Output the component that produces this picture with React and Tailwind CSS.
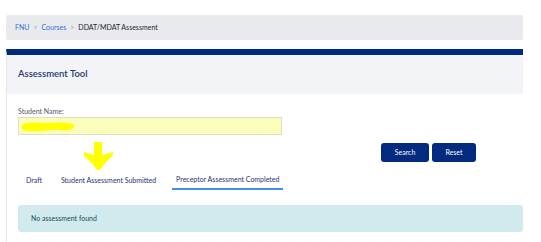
export default function App() {
  return (
    <div className="w-[541px] h-[242px] overflow-hidden bg-white pl-[6px] pr-[18px] pt-[15px] font-['Lato','Open_Sans',sans-serif]">
      {/* Breadcrumb */}
      <div className="h-[25px] rounded-[2px] bg-[#e9eaee] flex items-center gap-[4px] pl-[9px] text-[7px]">
        <span className="text-[#2f6fd8]">FNU</span>
        <span className="text-[#9aa0aa]">&gt;</span>
        <span className="text-[#2f6fd8]">Courses</span>
        <span className="text-[#9aa0aa]">&gt;</span>
        <span className="text-[#1f2330]">DDAT/MDAT Assessment</span>
      </div>

      {/* Card */}
      <div className="mt-[9px] border-t-[6px] border-[#022a7e] border-l border-l-[#e4e6ea] h-[200px]">
        <div className="h-[39px] bg-[#f3f4f7] flex items-center pl-[11px]">
          <h1 className="text-[9.5px] font-semibold text-[#2a3470]">Assessment Tool</h1>
        </div>

        <div className="relative pl-[11px] pt-[13px]">
          <label className="block text-[7px] text-[#555a63] leading-[9px]">Student Name:</label>
          <div className="relative mt-[1px] w-[264px] h-[18px] bg-[#fbfdbb] border border-[#dcdcc8]">
            <svg className="absolute left-[1px] top-[2px]" width="56" height="13" viewBox="0 0 56 13">
              <path d="M2 5 C8 1 20 3 30 3 C40 2 50 2 54 5 C56 9 48 11 40 10 C30 9 20 12 10 11 C4 11 0 9 2 5 Z" fill="#ffff00" />
            </svg>
          </div>

          <div className="flex justify-end gap-[3px] pr-[47px] mt-[8px]">
            <button className="w-[48px] h-[19px] rounded-[3px] bg-[#022a7e] text-white text-[7px]">Search</button>
            <button className="w-[44px] h-[19px] rounded-[3px] bg-[#022a7e] text-white text-[7px]">Reset</button>
          </div>

          {/* Arrow annotation */}
          <svg className="absolute left-[76px] top-[48px]" width="31" height="28" viewBox="0 0 31 28">
            <path d="M11 0 L19 0 L19 13 C22 12 26 11 30 10 L30 13 C26 17 21 22 17 28 L14 28 C10 22 5 17 1 14 L1 10 C4 11 8 12 11 13 Z" fill="#ffff00" />
          </svg>

          {/* Tabs */}
          <div className="flex items-end gap-[4px] mt-[12px] text-[7px] text-[#2a3470]">
            <div className="px-[6px] pb-[4px] ml-[2px]">Draft</div>
            <div className="px-[6px] pb-[4px] ml-[3px]">Student Assessment Submitted</div>
            <div className="px-[4px] pb-[3px] ml-[6px] border-b-2 border-[#3d8ff0]">Preceptor Assessment Completed</div>
          </div>

          {/* Alert */}
          <div className="mt-[15px] h-[27px] rounded-[3px] bg-[#d1eaee] flex items-center pl-[13px] text-[7px] text-[#174f5a]">
            No assessment found
          </div>
        </div>
      </div>
    </div>
  );
}
